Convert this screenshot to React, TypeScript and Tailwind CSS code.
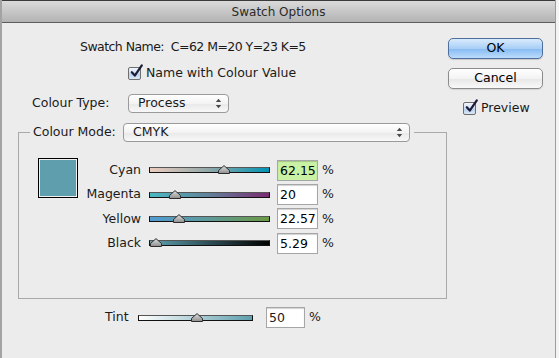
import React from "react";

type SliderProps = {
  w: string;
  grad: string;
  value: number;
};

const CheckBox = () => (
  <span className="relative inline-flex w-[13px] h-[13px] shrink-0 rounded-[2px] border border-[#6e6e6e] bg-[linear-gradient(#f2f7fd,#c9dcf2_50%,#b3cdec_51%,#dbe8f7)]">
    <svg className="absolute -top-[4px] left-[0px]" width="15" height="15" viewBox="0 0 15 15">
      <path
        d="M2.8 8.2 L5.8 11.6 L12.8 1.4"
        fill="none"
        stroke="#1b1b3a"
        strokeWidth="2.2"
        strokeLinecap="round"
        strokeLinejoin="round"
      />
    </svg>
  </span>
);

const Arrows = () => (
  <svg width="7" height="11" viewBox="0 0 7 11">
    <path d="M3.5 0.8 L6.2 4 H0.8 Z M3.5 10.2 L6.2 7 H0.8 Z" fill="#4a4a4a" />
  </svg>
);

const Thumb = () => (
  <svg width="12" height="9" viewBox="0 0 12 9">
    <defs>
      <linearGradient id="thumbFill" x1="0" y1="0" x2="0" y2="1">
        <stop offset="0" stopColor="#e2e2e2" />
        <stop offset="1" stopColor="#8c8c8c" />
      </linearGradient>
    </defs>
    <path d="M0.5 8.5 V5.5 L6 0.6 L11.5 5.5 V8.5 Z" fill="url(#thumbFill)" stroke="#2e2e2e" strokeWidth="1" />
  </svg>
);

const Slider: React.FC<SliderProps> = ({ w, grad, value }) => (
  <div className={`relative h-[6px] ${w} ${grad} border border-[#111] border-t-[#555]`}>
    <div className="absolute -bottom-[2px]" style={{ left: `calc(${value}% - 6px)` }}>
      <Thumb />
    </div>
  </div>
);

const NumBox = ({ value, green }: { value: string; green?: boolean }) => (
  <div
    className={`w-[41px] h-[21px] border border-[#a6a6a6] shadow-[inset_0_1px_1px_rgba(0,0,0,0.18)] pl-[2px] leading-[19px] text-[12.5px] text-black ${green ? "bg-[#c9f2a5]" : "bg-white"}`}
  >
    {value}
  </div>
);

const rows = [
  { label: "Cyan", value: "62.15", pct: 62, grad: "bg-[linear-gradient(to_right,#ecccbe,#8fa7a8_50%,#0094b5)]", green: true },
  { label: "Magenta", value: "20", pct: 21, grad: "bg-[linear-gradient(to_right,#49b9c2,#62809a_50%,#7a2a72)]" },
  { label: "Yellow", value: "22.57", pct: 24, grad: "bg-[linear-gradient(to_right,#4f9bd3,#5f9a98_50%,#6a9a42)]" },
  { label: "Black", value: "5.29", pct: 5, grad: "bg-[linear-gradient(to_right,#5fa3b2,#2d4d55_50%,#000000)]" },
];

const App: React.FC = () => {
  return (
    <div className="w-[559px] h-[358px] overflow-hidden bg-[#f4f4f4] flex font-['DejaVu_Sans',sans-serif] text-[12.5px] text-[#1a1a1a]">
      <div className="w-[556px] h-full flex flex-col bg-[#ececec] border-l-2 border-l-[#a3a3a3] border-r border-r-[#9c9c9c]">
        {/* title bar */}
        <div className="h-[23px] shrink-0 flex items-center justify-center border-t border-t-[#3a3a3a] border-b border-b-[#5c5c5c] bg-[linear-gradient(#dadada,#b3b3b3)] text-[12px] text-[#2a2a2a]">
          Swatch Options
        </div>

        <div className="flex">
          {/* left column */}
          <div className="w-[445px] flex flex-col">
            <div className="h-[20px] mt-[14px] pl-[78px] flex items-center tracking-[-0.55px]">
              Swatch Name:&nbsp; C=62 M=20 Y=23 K=5
            </div>

            <div className="h-[20px] mt-[6px] pl-[126px] flex items-center gap-[5px]">
              <CheckBox />
              <span>Name with Colour Value</span>
            </div>

            <div className="h-[20px] mt-[10px] pl-[30px] flex items-center">
              <span className="w-[96px]">Colour Type:</span>
              <div className="w-[101px] h-[19px] rounded-[4px] border border-[#9a9a9a] bg-[linear-gradient(#ffffff,#f3f3f3_50%,#e8e8e8_51%,#f8f8f8)] flex items-center justify-between pl-[9px] pr-[6px]">
                <span>Process</span>
                <Arrows />
              </div>
            </div>

            {/* colour mode group */}
            <div className="relative w-[429px] h-[167px] mt-[19px] ml-[16px] border border-[#a9a9a9] pl-[19px] pt-[25px] flex items-start">
              <div className="absolute left-[11px] -top-[10px] flex items-center bg-[#ececec] pl-[3px] pr-[4px]">
                <span className="w-[90px]">Colour Mode:</span>
                <div className="w-[287px] h-[19px] rounded-[4px] border border-[#9a9a9a] bg-[linear-gradient(#ffffff,#f3f3f3_50%,#e8e8e8_51%,#f8f8f8)] flex items-center justify-between pl-[9px] pr-[6px]">
                  <span>CMYK</span>
                  <Arrows />
                </div>
              </div>

              <div className="w-[40px] h-[40px] border border-black">
                <div className="w-full h-full border border-[#f0f0f0] bg-[#5f9fad]" />
              </div>

              <div className="ml-[2px] flex flex-col">
                {rows.map((r) => (
                  <div key={r.label} className="h-[24.4px] flex items-center">
                    <span className="w-[61px] text-right">{r.label}</span>
                    <div className="ml-[8px]">
                      <Slider w="w-[121px]" grad={r.grad} value={r.pct} />
                    </div>
                    <div className="ml-[7px]">
                      <NumBox value={r.value} green={r.green} />
                    </div>
                    <span className="ml-[4px]">%</span>
                  </div>
                ))}
              </div>
            </div>

            {/* tint */}
            <div className="h-[21px] mt-[8px] pl-[103px] flex items-center">
              <span className="w-[33px]">Tint</span>
              <Slider w="w-[115px]" grad="bg-[linear-gradient(to_right,#ffffff,#5f9fad)]" value={51} />
              <div className="ml-[13px]">
                <div className="w-[39px] h-[21px] border border-[#a6a6a6] shadow-[inset_0_1px_1px_rgba(0,0,0,0.18)] bg-white pl-[2px] leading-[19px]">
                  50
                </div>
              </div>
              <span className="ml-[4px]">%</span>
            </div>
          </div>

          {/* right column */}
          <div className="ml-[1px] pt-[15px] flex flex-col">
            <button className="w-[95px] h-[21px] rounded-[5px] border border-[#4f6f9f] bg-[linear-gradient(#d9ebfc,#a9cff6_50%,#85baf2_51%,#bcdcfc)] shadow-[0_1px_1px_rgba(0,0,0,0.15)] text-[12.5px] text-black leading-none">
              OK
            </button>
            <button className="w-[95px] h-[21px] mt-[9px] rounded-[5px] border border-[#8c8c8c] bg-[linear-gradient(#ffffff,#f3f3f3_50%,#e7e7e7_51%,#f9f9f9)] shadow-[0_1px_1px_rgba(0,0,0,0.1)] text-[12.5px] text-black leading-none">
              Cancel
            </button>
            <div className="h-[20px] mt-[9px] pl-[15px] flex items-center gap-[5px]">
              <CheckBox />
              <span>Preview</span>
            </div>
          </div>
        </div>
      </div>
    </div>
  );
};

export default App;
